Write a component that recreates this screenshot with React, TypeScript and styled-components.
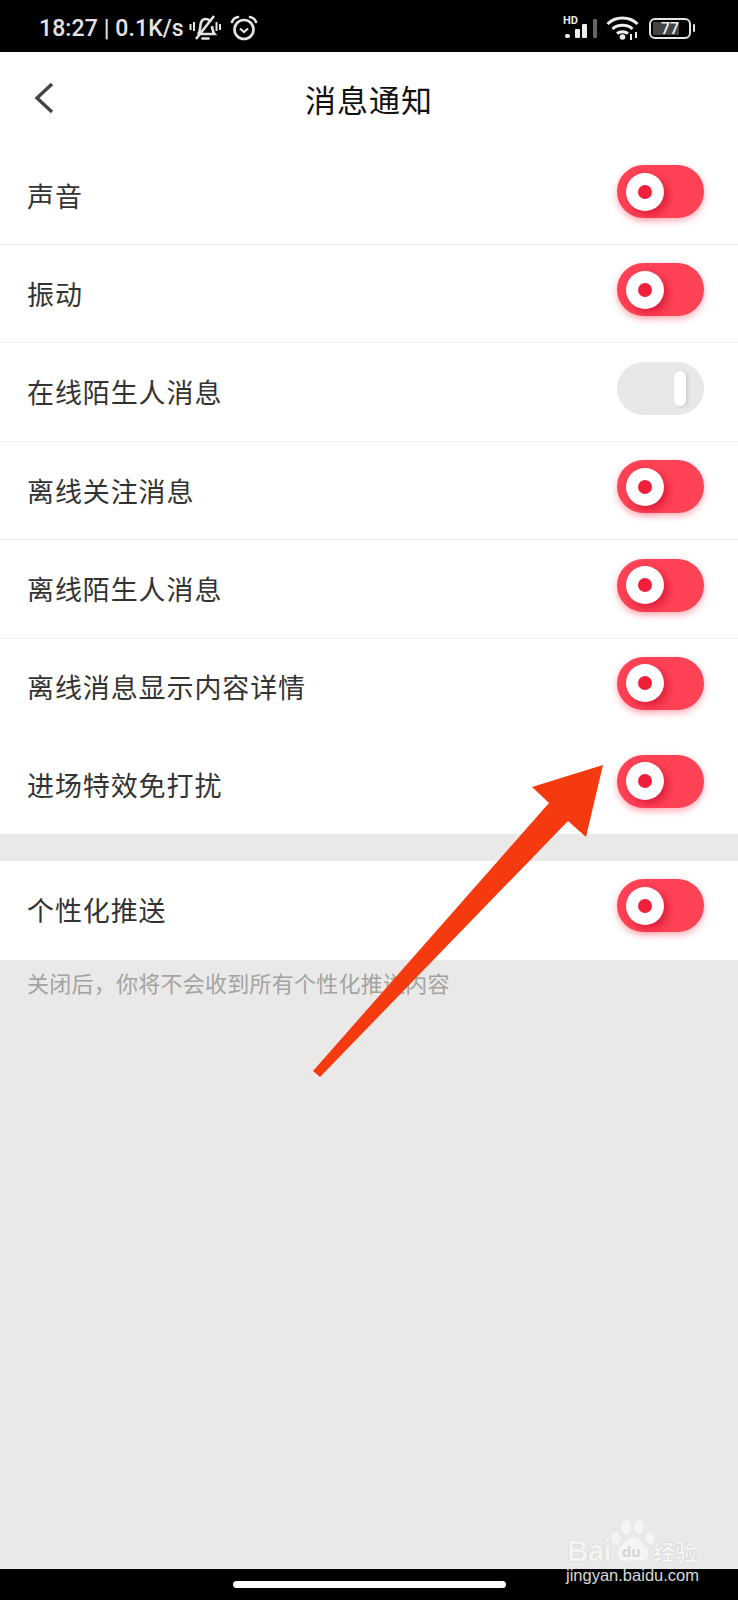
import React from "react";
import styled, { createGlobalStyle } from "styled-components";

const items = [
  { label: "声音", on: true, divider: true },
  { label: "振动", on: true, divider: true },
  { label: "在线陌生人消息", on: false, divider: true },
  { label: "离线关注消息", on: true, divider: true },
  { label: "离线陌生人消息", on: true, divider: true },
  { label: "离线消息显示内容详情", on: true, divider: false },
  { label: "进场特效免打扰", on: true, divider: false, short: true },
];

const App = () => {
  return (
    <Page>
      <GlobalStyle />
      <StatusBar>
        <StatusLeft>
          <StatusText>18:27 | 0.1K/s</StatusText>
          <svg width="32" height="28" viewBox="0 0 32 28" fill="none" stroke="#e4e4e4" strokeWidth="2.600">
            <path d="M9 20c2-2 2-5 2.500-9C12 7 14 5 16.500 5c2 0 4 1 5 3M23 12c.3 3 .8 6 2.500 8H8.500" />
            <path d="M13.500 24.500h6" strokeLinecap="round" />
            <path d="M7 25 25 2" />
            <path d="M1.500 10v6M5 8v9M27.500 8v9M31 10v6" strokeWidth="2" />
          </svg>
          <AlarmIcon viewBox="0 0 28 26" width="28" height="26" fill="none" stroke="#e4e4e4" strokeWidth="2.600">
            <circle cx="14" cy="14.500" r="9.500" />
            <path d="M2 7c1-2.500 3-4.500 6-5M26 7c-1-2.500-3-4.500-6-5" strokeLinecap="round" />
            <path d="M10 13.500l4 3.500 4-3.500" strokeWidth="2.200" />
          </AlarmIcon>
        </StatusLeft>
        <StatusRight>
          <svg width="36" height="28" viewBox="0 -4 36 28">
            <text x="0" y="6" fontSize="11" fontWeight="700" fill="#e8e8e8" fontFamily="Roboto, sans-serif">HD</text>
            <rect x="2" y="16" width="5" height="4" rx="2" fill="#eee" />
            <rect x="12" y="11" width="5" height="9" rx="1" fill="#eee" />
            <rect x="19" y="6" width="5" height="14" rx="1" fill="#eee" />
            <rect x="30" y="1" width="4" height="19" rx="1" fill="#666" />
          </svg>
          <WifiIcon width="34" height="26" viewBox="0 0 34 26" fill="none" stroke="#eee" strokeWidth="3">
            <path d="M1.500 9C9.500 1 23.500 1 31.500 9" />
            <path d="M6.500 14c5-5 15-5 20 0" />
            <path d="M11 18.500c3-2.500 8-2.500 11 0" />
            <circle cx="16.500" cy="22" r="2.800" fill="#eee" stroke="none" />
            <path d="M25 19v6M30 17v6" strokeWidth="2" />
          </WifiIcon>
          <Battery>
            <BatteryFill />
            <BatteryText>77</BatteryText>
          </Battery>
          <BatteryNub />
        </StatusRight>
      </StatusBar>

      <NavBar>
        <BackIcon width="20" height="32" viewBox="0 0 20 32" fill="none" stroke="#444" strokeWidth="3.400">
          <path d="M18 2 3 16l15 14" />
        </BackIcon>
        <Title>消息通知</Title>
      </NavBar>

      <Group>
        {items.map((item) => (
          <Row key={item.label} $divider={item.divider} $short={item.short}>
            <RowLabel>{item.label}</RowLabel>
            <Toggle on={item.on} />
          </Row>
        ))}
      </Group>

      <Spacer />

      <Group>
        <Row $divider={false}>
          <RowLabel>个性化推送</RowLabel>
          <Toggle on />
        </Row>
      </Group>

      <Note>关闭后，你将不会收到所有个性化推送内容</Note>

      <BottomBar>
        <HomeBar />
      </BottomBar>

      <ArrowOverlay width="738" height="1600" viewBox="0 0 738 1600">
        <polygon
          points="603,765 532,787 549,803 313,1071 320,1077 568,821 586,837"
          fill="#f53a10"
        />
      </ArrowOverlay>

      <Watermark>
        <LogoLine>
          <LogoBai>Bai</LogoBai>
          <Paw width="44" height="50" viewBox="0 0 44 50" fill="#f4f4f3">
            <ellipse cx="15" cy="9" rx="5" ry="7" />
            <ellipse cx="28" cy="9" rx="5" ry="7" />
            <ellipse cx="5" cy="20" rx="4.500" ry="6" />
            <ellipse cx="39" cy="20" rx="4.500" ry="6" />
            <path d="M22 19c7 0 9 7 13 11 5 6 1 14-6 13-4-1-10-1-14 0-7 1-11-7-6-13 4-4 6-11 13-11z" />
          </Paw>
          <LogoDu>du</LogoDu>
          <LogoCn>经验</LogoCn>
        </LogoLine>
        <WatermarkUrl>jingyan.baidu.com</WatermarkUrl>
      </Watermark>
    </Page>
  );
};

const Toggle = ({ on }: { on: boolean }) => (
  <Track $on={on}>{on ? <Knob><KnobDot /></Knob> : <OffKnob />}</Track>
);

const GlobalStyle = createGlobalStyle`
  body {
    margin: 0;
    background: #eae9e7;
    font-family: "Noto Sans CJK SC", "Noto Sans", sans-serif;
  }
`;

const Page = styled.div`
  position: relative;
  width: 738px;
  height: 1600px;
  overflow: hidden;
  display: flex;
  flex-direction: column;
  background: #eae9e7;
`;

const StatusBar = styled.div`
  height: 52px;
  background: #000;
  display: flex;
  align-items: center;
  justify-content: space-between;
  padding: 12px 43px 8px 39px;
  box-sizing: border-box;
  flex-shrink: 0;
`;

const StatusLeft = styled.div`
  display: flex;
  align-items: center;
  gap: 5px;
`;

const StatusRight = styled.div`
  display: flex;
  align-items: center;
`;

const StatusText = styled.span`
  font-family: Roboto, sans-serif;
  font-size: 23px;
  font-weight: 500;
  letter-spacing: 0.1px;
  color: #e4e4e4;
  white-space: nowrap;
`;

const AlarmIcon = styled.svg`
  margin-left: 4px;
`;

const WifiIcon = styled.svg`
  margin-left: 7px;
`;

const Battery = styled.div`
  position: relative;
  margin-left: 9px;
  width: 42px;
  height: 21px;
  box-sizing: border-box;
  border: 2px solid #e4e4e4;
  border-radius: 6px;
  padding: 2px;
  display: flex;
`;

const BatteryFill = styled.div`
  width: 77%;
  background: #444;
  border-radius: 1px;
`;

const BatteryText = styled.span`
  position: absolute;
  left: 0;
  right: 0;
  top: 0;
  bottom: 0;
  display: flex;
  align-items: center;
  justify-content: center;
  font-family: Roboto, sans-serif;
  font-size: 16px;
  font-weight: 500;
  color: #eee;
`;

const BatteryNub = styled.div`
  width: 2px;
  height: 8px;
  margin-left: 2px;
  background: #e4e4e4;
  border-radius: 1px;
`;

const NavBar = styled.div`
  position: relative;
  height: 95px;
  background: #fff;
  display: flex;
  align-items: center;
  justify-content: center;
  flex-shrink: 0;
`;

const BackIcon = styled.svg`
  position: absolute;
  left: 34px;
  top: 30px;
`;

const Title = styled.h1`
  margin: 0 0 2px;
  font-size: 31px;
  font-weight: 400;
  letter-spacing: 1px;
  line-height: 40px;
  color: #111;
`;

const Group = styled.div`
  background: #fff;
  flex-shrink: 0;
`;

const Row = styled.div<{ $divider: boolean; $short?: boolean }>`
  height: ${(p) => (p.$short ? "97px" : "98px")};
  box-sizing: border-box;
  margin-bottom: ${(p) => (p.$short ? "0" : "0.4px")};
  padding: 0 34px 0 27px;
  display: flex;
  align-items: center;
  justify-content: space-between;
  border-bottom: 1px solid ${(p) => (p.$divider ? "#eeeeee" : "transparent")};
`;

const RowLabel = styled.span`
  font-size: 27px;
  letter-spacing: 0.9px;
  line-height: 36px;
  color: #333;
`;

const Track = styled.div<{ $on: boolean }>`
  position: relative;
  width: 87px;
  height: 53px;
  margin-bottom: 8px;
  border-radius: 27px;
  background: ${(p) => (p.$on ? "#ff4256" : "#e8e8e8")};
  box-shadow: ${(p) =>
    p.$on ? "0 3px 7px rgba(255, 50, 75, 0.4)" : "none"};
  display: flex;
  align-items: center;
  overflow: visible;
`;

const Knob = styled.div`
  width: 38px;
  height: 38px;
  margin-left: 9px;
  border-radius: 50%;
  background: #fff;
  box-shadow: 4px 4px 8px rgba(190, 0, 35, 0.55);
  display: flex;
  align-items: center;
  justify-content: center;
`;

const KnobDot = styled.div`
  width: 14px;
  height: 14px;
  border-radius: 50%;
  background: #f0203c;
`;

const OffKnob = styled.div`
  width: 12px;
  height: 35px;
  margin-left: 57px;
  border-radius: 6px;
  background: #fff;
  box-shadow: 2px 1px 4px rgba(0, 0, 0, 0.12);
`;

const Spacer = styled.div`
  height: 27px;
  flex-shrink: 0;
`;

const Note = styled.p`
  margin: 0;
  padding: 5px 27px 0;
  font-size: 22px;
  letter-spacing: 0.25px;
  line-height: 34px;
  color: #a3a3a3;
  flex: 1;
`;

const BottomBar = styled.div`
  height: 31px;
  background: #000;
  display: flex;
  justify-content: center;
  flex-shrink: 0;
  padding-top: 12px;
  box-sizing: border-box;
`;

const HomeBar = styled.div`
  width: 273px;
  height: 7px;
  border-radius: 4px;
  background: #fff;
`;

const ArrowOverlay = styled.svg`
  position: absolute;
  left: 0;
  top: 0;
  pointer-events: none;
`;

const Watermark = styled.div`
  position: absolute;
  left: 566px;
  top: 1518px;
  width: 136px;
  height: 66px;
`;

const LogoLine = styled.div`
  position: relative;
  height: 46px;
`;

const LogoBai = styled.span`
  position: absolute;
  left: 1px;
  top: 16px;
  font-family: "Liberation Sans", sans-serif;
  font-size: 30px;
  letter-spacing: -1px;
  line-height: 34px;
  font-weight: 700;
  color: #f4f4f3;
  text-shadow: 0 0 1px rgba(0, 0, 0, 0.25);
`;

const Paw = styled.svg`
  position: absolute;
  left: 45px;
  top: 0;
`;

const LogoDu = styled.span`
  position: absolute;
  left: 56px;
  top: 26px;
  font-family: "Liberation Sans", sans-serif;
  font-size: 15px;
  line-height: 16px;
  font-weight: 700;
  color: #d4d4d4;
`;

const LogoCn = styled.span`
  position: absolute;
  left: 87px;
  top: 18px;
  font-size: 22px;
  line-height: 28px;
  font-weight: 700;
  color: #f4f4f3;
  text-shadow: 0 0 1px rgba(0, 0, 0, 0.25);
  white-space: nowrap;
`;

const WatermarkUrl = styled.div`
  margin-top: 1px;
  font-family: "Liberation Sans", sans-serif;
  font-size: 16.500px;
  line-height: 20px;
  color: #d8d8d8;
  white-space: nowrap;
`;

export default App;
